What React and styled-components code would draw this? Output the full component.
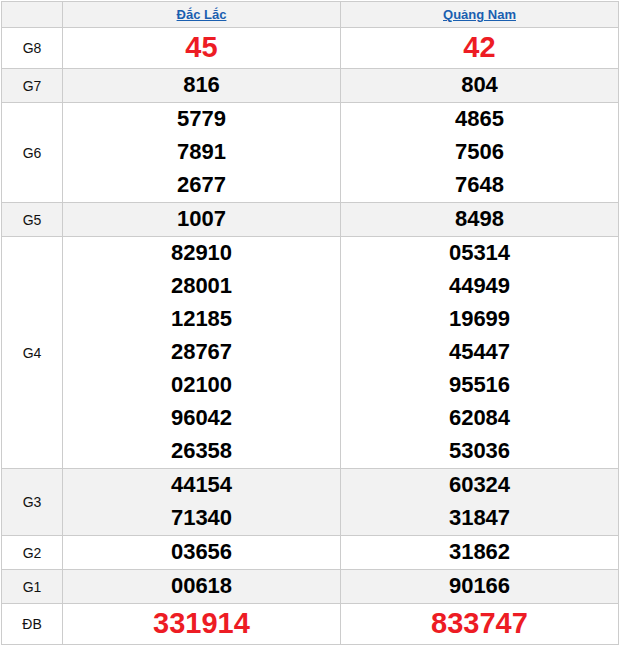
import React from "react";
import styled, { createGlobalStyle } from "styled-components";

const Global = createGlobalStyle`
  html, body { margin: 0; padding: 0; background: #fff; }
  body { font-family: "Liberation Sans", Arial, sans-serif; }
`;

const Page = styled.div`
  padding: 1px 0 0 1px;
`;

const Grid = styled.div`
  display: grid;
  grid-template-columns: 60px 277px 277px;
  gap: 1px;
  padding: 1px;
  background: #cccccc;
  width: 616px;
`;

const Cell = styled.div`
  background: ${(p) => (p.$alt ? "#f2f2f2" : "#ffffff")};
  display: flex;
  flex-direction: column;
  align-items: center;
  justify-content: center;
`;

const HeadCell = styled(Cell)`
  height: 25px;
  background: #f2f2f2;
`;

const HeadLink = styled.a`
  font-size: 13px;
  font-weight: bold;
  color: #1a5fb0;
  text-decoration: underline;
`;

const Label = styled.span`
  font-size: 14px;
  color: #111;
`;

const Num = styled.span`
  font-size: ${(p) => (p.$big ? "29px" : "22px")};
  line-height: ${(p) => (p.$big ? "40px" : "33px")};
  margin: -1px 0 1px;
  font-weight: bold;
  color: ${(p) => (p.$big ? "#ed1c24" : "#000")};
`;

const rows = [
  { label: "G8", big: true, a: ["45"], b: ["42"] },
  { label: "G7", a: ["816"], b: ["804"] },
  { label: "G6", a: ["5779", "7891", "2677"], b: ["4865", "7506", "7648"] },
  { label: "G5", a: ["1007"], b: ["8498"] },
  {
    label: "G4",
    a: ["82910", "28001", "12185", "28767", "02100", "96042", "26358"],
    b: ["05314", "44949", "19699", "45447", "95516", "62084", "53036"],
  },
  { label: "G3", a: ["44154", "71340"], b: ["60324", "31847"] },
  { label: "G2", a: ["03656"], b: ["31862"] },
  { label: "G1", a: ["00618"], b: ["90166"] },
  { label: "ĐB", big: true, a: ["331914"], b: ["833747"] },
];

export default function App() {
  return (
    <Page>
      <Global />
      <Grid>
        <HeadCell />
        <HeadCell>
          <HeadLink href="#">Đắc Lắc</HeadLink>
        </HeadCell>
        <HeadCell>
          <HeadLink href="#">Quảng Nam</HeadLink>
        </HeadCell>
        {rows.map((r, i) => {
          const alt = i % 2 === 1;
          return (
            <React.Fragment key={r.label}>
              <Cell $alt={alt}>
                <Label>{r.label}</Label>
              </Cell>
              <Cell $alt={alt}>
                {r.a.map((n) => (
                  <Num key={n} $big={r.big}>{n}</Num>
                ))}
              </Cell>
              <Cell $alt={alt}>
                {r.b.map((n) => (
                  <Num key={n} $big={r.big}>{n}</Num>
                ))}
              </Cell>
            </React.Fragment>
          );
        })}
      </Grid>
    </Page>
  );
}
